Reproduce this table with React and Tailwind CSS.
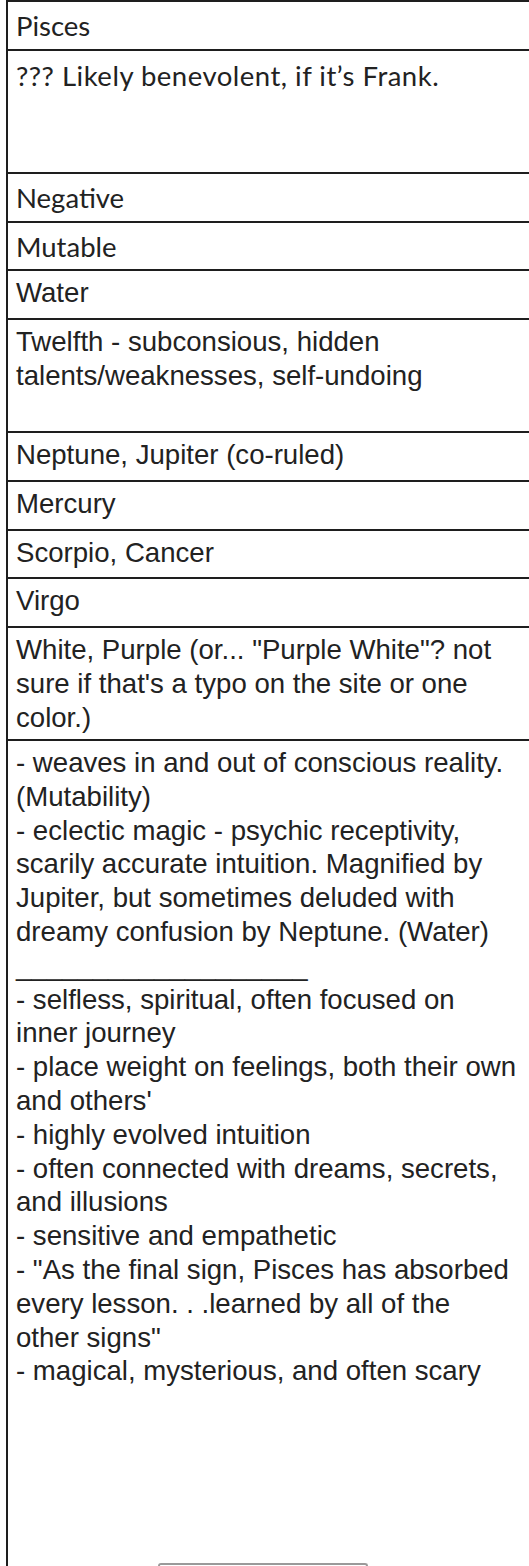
import React from "react";

const arial = "font-['Liberation_Sans',Arial,sans-serif] text-[27.6px] leading-[33.8px] text-[#222]";
const calibri = "font-['Lato',sans-serif] text-[27.5px] leading-[33.8px] text-[#222]";

function Row({ h, font, pt = "pt-[5px]", extra = "", lines, last }) {
  return (
    <div
      className={`${last ? "flex-1" : "border-b-2 border-[#1e1e1e]"} pl-[8px] ${pt} ${font} ${extra} whitespace-nowrap`}
      style={last ? undefined : { height: h }}
    >
      {lines.map((l, i) => (
        <div key={i}>{l}</div>
      ))}
    </div>
  );
}

export default function App() {
  const rows = [
    { h: 49, font: calibri, pt: "pt-[7px]", lines: ["Pisces"] },
    { h: 123, font: calibri, pt: "pt-[8px]", extra: "tracking-[0.5px]", lines: ["??? Likely benevolent, if it’s Frank."] },
    { h: 49, font: calibri, pt: "pt-[7px]", lines: ["Negative"] },
    { h: 48, font: calibri, pt: "pt-[7px]", lines: ["Mutable"] },
    { h: 49, font: arial, lines: ["Water"] },
    { h: 113, font: arial, lines: ["Twelfth - subconsious, hidden", "talents/weaknesses, self-undoing"] },
    { h: 49, font: arial, lines: ["Neptune, Jupiter (co-ruled)"] },
    { h: 49, font: arial, lines: ["Mercury"] },
    { h: 48, font: arial, lines: ["Scorpio, Cancer"] },
    { h: 49, font: arial, lines: ["Virgo"] },
    {
      h: 113,
      font: arial,
      lines: [
        "White, Purple (or... \"Purple White\"? not",
        "sure if that's a typo on the site or one",
        "color.)",
      ],
    },
    {
      last: true,
      font: arial,
      lines: [
        "- weaves in and out of conscious reality.",
        "(Mutability)",
        "- eclectic magic - psychic receptivity,",
        "scarily accurate intuition. Magnified by",
        "Jupiter, but sometimes deluded with",
        "dreamy confusion by Neptune. (Water)",
        "___________________",
        "- selfless, spiritual, often focused on",
        "inner journey",
        "- place weight on feelings, both their own",
        "and others'",
        "- highly evolved intuition",
        "- often connected with dreams, secrets,",
        "and illusions",
        "- sensitive and empathetic",
        "- \"As the final sign, Pisces has absorbed",
        "every lesson. . .learned by all of the",
        "other signs\"",
        "- magical, mysterious, and often scary",
      ],
    },
  ];

  return (
    <div className="relative w-[529px] h-[1566px] overflow-hidden bg-white">
      <div className="ml-[6px] h-full flex flex-col border-l-2 border-t-2 border-[#1e1e1e]">
        {rows.map((r, i) => (
          <Row key={i} {...r} />
        ))}
      </div>
      <div className="absolute left-[158px] top-[1563px] w-[210px] h-[8px] rounded-t-[3px] border-t-2 border-x-2 border-[#9a9a9a] bg-white" />
    </div>
  );
}
